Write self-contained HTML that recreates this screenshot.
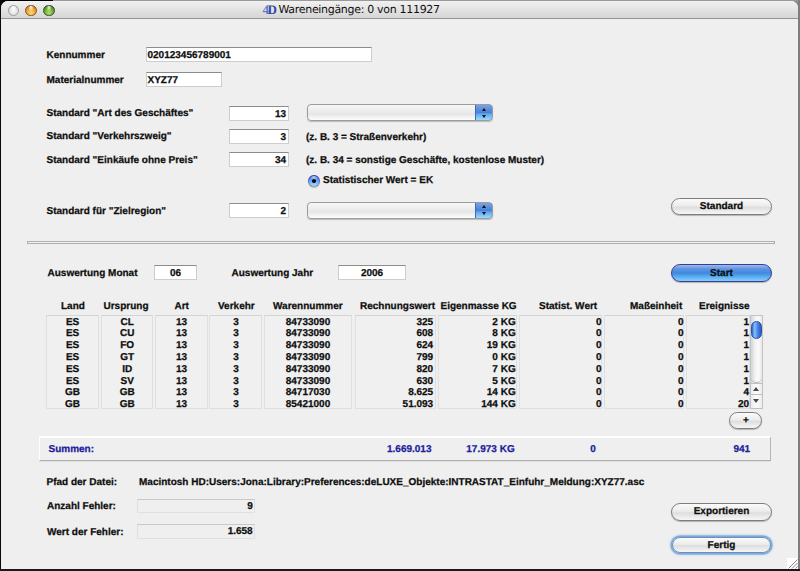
<!DOCTYPE html>
<html lang="de">
<head>
<meta charset="utf-8">
<title>Wareneingänge: 0 von 111927</title>
<style>
html,body{margin:0;padding:0;}
body{width:800px;height:571px;overflow:hidden;background:#8c8c8c;position:relative;
 font-family:"Liberation Sans",sans-serif;font-weight:bold;font-size:10px;color:#0e0e0e;line-height:12px;-webkit-text-stroke:0.25px;text-rendering:geometricPrecision;}
#edgeL{position:absolute;left:0;top:0;width:2px;height:571px;background:#0a0a0a;}
#edgeB{position:absolute;left:0;top:569px;width:800px;height:2px;background:#1a1a1a;}
#edgeT{position:absolute;left:0;top:0;width:53px;height:1px;background:#000;}#cornerTL{position:absolute;left:0;top:0;width:9px;height:9px;background:#000;}
#edgeT2{position:absolute;left:53px;top:0;width:747px;height:1px;background:#9a9a9a;}
#edgeR{position:absolute;left:798px;top:0;width:2px;height:571px;background:#7e7e7e;}
#win{position:absolute;left:1px;top:1px;width:797px;height:568px;background:#efefef;border-radius:7px 7px 0 0;overflow:hidden;}
#tb{position:absolute;left:0;top:0;width:797px;height:17px;background:linear-gradient(#f1f1f1 0%,#e6e6e6 40%,#d6d6d6 100%);border-bottom:1px solid #969696;}
#title{position:absolute;left:277.5px;top:1.5px;font:normal 11px/14px "DejaVu Sans","Liberation Sans",sans-serif;letter-spacing:-0.31px;color:#111;white-space:nowrap;-webkit-text-stroke:0;}
#ic4d{position:absolute;left:261.5px;top:1.5px;font:bold 13px/14px "Liberation Serif",serif;color:#3048a8;letter-spacing:-1.6px;-webkit-text-stroke:0;}#ic4d b{color:#5f7ccc;}
.tl{position:absolute;top:3.6px;width:11.6px;height:11.6px;border-radius:50%;box-sizing:border-box;}
#pg{position:absolute;left:-1px;top:-1px;width:800px;height:571px;}
.t{position:absolute;white-space:nowrap;}
.f{position:absolute;box-sizing:border-box;background:#fff;border:1px solid #cdcdcd;border-top-color:#8c8c8c;white-space:nowrap;line-height:12px;padding:2px 2px 0 0.5px;}
.f.r{text-align:right;}
.f.c{text-align:center;padding-left:0;padding-right:0;}
.ro{position:absolute;box-sizing:border-box;border:1px solid #e0e0e0;border-top-color:#c8c8c8;background:#efefef;text-align:right;padding:1px 1px 0 0;white-space:nowrap;}
.btn{position:absolute;box-sizing:border-box;border:1px solid #7d7d7d;border-radius:9px;text-align:center;
 background:linear-gradient(#fbfbfb 0%,#ececec 45%,#dedede 55%,#f6f6f6 100%);box-shadow:0 1px 1px rgba(0,0,0,.25);line-height:16.4px;white-space:nowrap;}
.pop{position:absolute;box-sizing:border-box;border:1px solid #9c9c9c;border-radius:4px;height:17px;
 background:linear-gradient(#f7f7f7 0%,#eaeaea 50%,#e4e4e4 55%,#fdfdfd 100%);box-shadow:0 1px 1px rgba(0,0,0,.22);overflow:hidden;}
.pop i{position:absolute;right:-1px;top:-1px;width:18px;height:17px;box-sizing:border-box;border:1px solid #4468b8;border-radius:0 4px 4px 0;background:linear-gradient(#77a4e4 0%,#5a8edc 30%,#4682dc 50%,#5fa6ea 60%,#9adafc 100%);}
.pop i:before{content:"";position:absolute;left:6px;top:2.5px;border:2px solid transparent;border-top:0;border-bottom:3.5px solid #111;}
.pop i:after{content:"";position:absolute;left:6px;top:9.5px;border:2px solid transparent;border-bottom:0;border-top:3.5px solid #111;}
.cell{position:absolute;top:315px;height:94px;box-sizing:border-box;border:1px solid #dfdfdf;border-top-color:#d4d4d4;background:#f0f0f0;}
.col{position:absolute;line-height:11.9px;white-space:pre;}
.col.c{text-align:center;}
.col.r{text-align:right;}
.blue{color:#1c1c9c;}
#radio{position:absolute;left:307.8px;top:174.8px;width:12.2px;height:12.4px;border-radius:50%;background:linear-gradient(#3434ac 0%,#4a6cc8 50%,#8a9cb4 100%);box-shadow:0 1px 1px rgba(0,0,0,.22);}
#radio:before{content:"";position:absolute;left:1.2px;top:1.2px;right:1.2px;bottom:1.2px;border-radius:50%;background:radial-gradient(ellipse at 50% 12%,rgba(255,255,255,.55) 0,rgba(255,255,255,0) 45%),linear-gradient(#5584dc 0%,#62a0ea 45%,#a6e2ff 100%);}
#radio:after{content:"";position:absolute;left:4.3px;top:4.2px;width:3.6px;height:3.6px;border-radius:50%;background:#0a0a14;}
#sep{position:absolute;left:27px;top:241px;width:748px;height:3px;box-sizing:border-box;border:1px solid #adadad;background:#f4f4f4;}
.btn.start{border-color:#3c3c98;background:linear-gradient(#9db9e8 0%,#5c95e2 25%,#3f88e0 50%,#55a8ee 70%,#86d0fa 100%);}
.btn.focus{box-shadow:0 0 0 1.5px #7aa9dc,0 0 2px 2px rgba(122,169,220,.6);border-color:#6a8fc0;}
#sb{position:absolute;left:750px;top:315px;width:12.5px;height:93.5px;box-sizing:border-box;border:1px solid #c4c4c4;background:linear-gradient(90deg,#d4d4d4 0%,#f4f4f4 40%,#fafafa 70%,#e6e6e6 100%);}
#thumb{position:absolute;left:0px;top:5px;width:10.5px;height:17.5px;border-radius:5.5px;box-sizing:border-box;border:1px solid #2c4cb0;background:linear-gradient(90deg,#2f62cc 0%,#86c0f8 30%,#4a8ae6 60%,#2a58c4 100%);}
#trackend{position:absolute;left:0;top:50px;width:10.5px;height:16px;border-radius:0 0 6px 6px;border-bottom:1px solid #b8b8b8;}
.ar{position:absolute;left:-1px;width:12.5px;box-sizing:border-box;border:1px solid #c0c0c0;background:linear-gradient(90deg,#ececec,#fbfbfb 50%,#ececec);}
.ar.up{top:66.5px;height:12.5px;}
.ar.dn{top:78px;height:14.5px;}
.ar.up:after{content:"";position:absolute;left:2.4px;top:3.2px;border:3px solid transparent;border-top:0;border-bottom:4px solid #484848;}
.ar.dn:after{content:"";position:absolute;left:2.4px;top:4.2px;border:3px solid transparent;border-bottom:0;border-top:4px solid #484848;}
#sum{position:absolute;left:38.75px;top:436px;width:732px;height:24.5px;box-sizing:border-box;border:1px solid #fff;border-top:2px solid #fff;border-right:1px solid #b4b4b4;border-bottom:1px solid #b0b0b0;background:#efefef;box-shadow:0 1px 0 rgba(0,0,0,.06);}
#grip{position:absolute;left:787px;top:558px;width:11px;height:11px;background:#fff;}
#grip svg{display:block;}
</style>
</head>
<body>
<div id="cornerTL"></div><div id="edgeT"></div><div id="edgeT2"></div><div id="edgeR"></div><div id="edgeL"></div><div id="edgeB"></div>
<div id="win">
 <div id="tb">
  <div class="tl" style="left:6.7px;background:radial-gradient(ellipse at 50% 18%,#fff 0,rgba(255,255,255,0) 50%),radial-gradient(circle at 50% 60%,#f4f4f4 0%,#e0e0e0 60%,#c4c4c4 100%);border:1px solid #9c9c9c;"></div>
  <div class="tl" style="left:24.3px;background:radial-gradient(ellipse at 50% 14%,rgba(255,255,255,.9) 0,rgba(255,255,255,0) 42%),radial-gradient(circle at 50% 78%,#f8dc60 0%,#eca63c 50%,#b4601c 100%);border:1px solid #8c4a16;"></div>
  <div class="tl" style="left:42px;background:radial-gradient(ellipse at 50% 14%,rgba(255,255,255,.85) 0,rgba(255,255,255,0) 42%),radial-gradient(circle at 50% 78%,#b0e068 0%,#6cb030 50%,#38601c 100%);border:1px solid #36462c;"></div>
  <div id="ic4d"><b>4</b>D</div>
  <div id="title">Wareneingänge: 0 von 111927</div>
 </div>
 <div id="pg">
<div class="t" style="left:46.5px;top:49.50px;">Kennummer</div>
<div class="t" style="left:46.5px;top:74.50px;">Materialnummer</div>
<div class="t" style="left:46.5px;top:107.50px;">Standard "Art des Geschäftes"</div>
<div class="t" style="left:46.5px;top:130.50px;">Standard "Verkehrszweig"</div>
<div class="t" style="left:46.5px;top:154.50px;">Standard "Einkäufe ohne Preis"</div>
<div class="t" style="left:46.5px;top:205.50px;">Standard für "Zielregion"</div>
<div class="t" style="left:47.5px;top:267.50px;">Auswertung Monat</div>
<div class="t" style="left:231.5px;top:267.50px;">Auswertung Jahr</div>
<div class="t" style="left:306px;top:131.50px;">(z. B. 3 = Straßenverkehr)</div>
<div class="t" style="left:306px;top:154.50px;">(z. B. 34 = sonstige Geschäfte, kostenlose Muster)</div>
<div class="t" style="left:323px;top:174.50px;">Statistischer Wert = EK</div>
<div class="t" style="left:46.5px;top:476.50px;">Pfad der Datei:</div>
<div class="t" style="left:139px;top:476.50px;">Macintosh HD:Users:Jona:Library:Preferences:deLUXE_Objekte:INTRASTAT_Einfuhr_Meldung:XYZ77.asc</div>
<div class="t" style="left:47px;top:500.50px;">Anzahl Fehler:</div>
<div class="t" style="left:47px;top:527.10px;">Wert der Fehler:</div>
<div class="f " style="left:146px;top:47px;width:226px;height:15px;">020123456789001</div>
<div class="f " style="left:146px;top:72px;width:76px;height:15px;">XYZ77</div>
<div class="f r" style="left:229px;top:106px;width:60px;height:15px;">13</div>
<div class="f r" style="left:229px;top:129px;width:60px;height:15px;">3</div>
<div class="f r" style="left:229px;top:152px;width:60px;height:15px;">34</div>
<div class="f r" style="left:229px;top:203px;width:60px;height:15px;">2</div>
<div class="f c" style="left:154px;top:265px;width:43px;height:15px;">06</div>
<div class="f c" style="left:338px;top:265px;width:68px;height:15px;">2006</div>
<div class="pop" style="left:307px;top:104px;width:185.5px;"><i></i></div>
<div class="pop" style="left:307px;top:201.5px;width:185.5px;"><i></i></div>
<div id="radio"></div>
<div id="sep"></div>
<div class="btn" style="left:671px;top:197.5px;width:101px;height:17px;">Standard</div>
<div class="btn start" style="left:671px;top:264px;width:101px;height:17.5px;line-height:17.2px;">Start</div>
<div class="btn" style="left:729.3px;top:412px;width:33px;height:17px;">+</div>
<div class="btn" style="left:671px;top:503px;width:101px;height:17.5px;">Exportieren</div>
<div class="btn focus" style="left:672px;top:537px;width:99px;height:16px;line-height:15.6px;">Fertig</div>
<div class="t" style="left:61px;top:300.50px;">Land</div>
<div class="t" style="left:103.5px;top:300.50px;">Ursprung</div>
<div class="t" style="left:174.5px;top:300.50px;">Art</div>
<div class="t" style="left:218px;top:300.50px;">Verkehr</div>
<div class="t" style="left:273px;top:300.50px;">Warennummer</div>
<div class="t" style="left:360px;top:300.50px;">Rechnungswert</div>
<div class="t" style="left:440.5px;top:300.50px;">Eigenmasse KG</div>
<div class="t" style="left:539px;top:300.50px;">Statist. Wert</div>
<div class="t" style="left:630px;top:300.50px;">Maßeinheit</div>
<div class="t" style="left:699px;top:300.50px;">Ereignisse</div>
<div class="cell" style="left:46.25px;width:52.95px;"></div>
<div class="cell" style="left:100.6px;width:52.90px;"></div>
<div class="cell" style="left:155px;width:52.50px;"></div>
<div class="cell" style="left:209.4px;width:52.60px;"></div>
<div class="cell" style="left:263.7px;width:88.80px;"></div>
<div class="cell" style="left:354.5px;width:81.50px;"></div>
<div class="cell" style="left:437.6px;width:79.40px;"></div>
<div class="cell" style="left:518.5px;width:83.70px;"></div>
<div class="cell" style="left:604px;width:80.00px;"></div>
<div class="cell" style="left:685.5px;width:64.50px;"></div>
<div class="t" style="left:32.599999999999994px;width:80px;text-align:center;top:316.6px;">ES</div>
<div class="t" style="left:32.599999999999994px;width:80px;text-align:center;top:328.4px;">ES</div>
<div class="t" style="left:32.599999999999994px;width:80px;text-align:center;top:340.2px;">ES</div>
<div class="t" style="left:32.599999999999994px;width:80px;text-align:center;top:352.0px;">ES</div>
<div class="t" style="left:32.599999999999994px;width:80px;text-align:center;top:363.8px;">ES</div>
<div class="t" style="left:32.599999999999994px;width:80px;text-align:center;top:375.6px;">ES</div>
<div class="t" style="left:32.599999999999994px;width:80px;text-align:center;top:387.4px;">GB</div>
<div class="t" style="left:32.599999999999994px;width:80px;text-align:center;top:399.2px;">GB</div>
<div class="t" style="left:87.2px;width:80px;text-align:center;top:316.6px;">CL</div>
<div class="t" style="left:87.2px;width:80px;text-align:center;top:328.4px;">CU</div>
<div class="t" style="left:87.2px;width:80px;text-align:center;top:340.2px;">FO</div>
<div class="t" style="left:87.2px;width:80px;text-align:center;top:352.0px;">GT</div>
<div class="t" style="left:87.2px;width:80px;text-align:center;top:363.8px;">ID</div>
<div class="t" style="left:87.2px;width:80px;text-align:center;top:375.6px;">SV</div>
<div class="t" style="left:87.2px;width:80px;text-align:center;top:387.4px;">GB</div>
<div class="t" style="left:87.2px;width:80px;text-align:center;top:399.2px;">GB</div>
<div class="t" style="left:141.5px;width:80px;text-align:center;top:316.6px;">13</div>
<div class="t" style="left:141.5px;width:80px;text-align:center;top:328.4px;">13</div>
<div class="t" style="left:141.5px;width:80px;text-align:center;top:340.2px;">13</div>
<div class="t" style="left:141.5px;width:80px;text-align:center;top:352.0px;">13</div>
<div class="t" style="left:141.5px;width:80px;text-align:center;top:363.8px;">13</div>
<div class="t" style="left:141.5px;width:80px;text-align:center;top:375.6px;">13</div>
<div class="t" style="left:141.5px;width:80px;text-align:center;top:387.4px;">13</div>
<div class="t" style="left:141.5px;width:80px;text-align:center;top:399.2px;">13</div>
<div class="t" style="left:196px;width:80px;text-align:center;top:316.6px;">3</div>
<div class="t" style="left:196px;width:80px;text-align:center;top:328.4px;">3</div>
<div class="t" style="left:196px;width:80px;text-align:center;top:340.2px;">3</div>
<div class="t" style="left:196px;width:80px;text-align:center;top:352.0px;">3</div>
<div class="t" style="left:196px;width:80px;text-align:center;top:363.8px;">3</div>
<div class="t" style="left:196px;width:80px;text-align:center;top:375.6px;">3</div>
<div class="t" style="left:196px;width:80px;text-align:center;top:387.4px;">3</div>
<div class="t" style="left:196px;width:80px;text-align:center;top:399.2px;">3</div>
<div class="t" style="left:268px;width:80px;text-align:center;top:316.6px;">84733090</div>
<div class="t" style="left:268px;width:80px;text-align:center;top:328.4px;">84733090</div>
<div class="t" style="left:268px;width:80px;text-align:center;top:340.2px;">84733090</div>
<div class="t" style="left:268px;width:80px;text-align:center;top:352.0px;">84733090</div>
<div class="t" style="left:268px;width:80px;text-align:center;top:363.8px;">84733090</div>
<div class="t" style="left:268px;width:80px;text-align:center;top:375.6px;">84733090</div>
<div class="t" style="left:268px;width:80px;text-align:center;top:387.4px;">84717030</div>
<div class="t" style="left:268px;width:80px;text-align:center;top:399.2px;">85421000</div>
<div class="t" style="left:353.2px;width:80px;text-align:right;top:316.6px;">325</div>
<div class="t" style="left:353.2px;width:80px;text-align:right;top:328.4px;">608</div>
<div class="t" style="left:353.2px;width:80px;text-align:right;top:340.2px;">624</div>
<div class="t" style="left:353.2px;width:80px;text-align:right;top:352.0px;">799</div>
<div class="t" style="left:353.2px;width:80px;text-align:right;top:363.8px;">820</div>
<div class="t" style="left:353.2px;width:80px;text-align:right;top:375.6px;">630</div>
<div class="t" style="left:353.2px;width:80px;text-align:right;top:387.4px;">8.625</div>
<div class="t" style="left:353.2px;width:80px;text-align:right;top:399.2px;">51.093</div>
<div class="t" style="left:435.70000000000005px;width:80px;text-align:right;top:316.6px;">2 KG</div>
<div class="t" style="left:435.70000000000005px;width:80px;text-align:right;top:328.4px;">8 KG</div>
<div class="t" style="left:435.70000000000005px;width:80px;text-align:right;top:340.2px;">19 KG</div>
<div class="t" style="left:435.70000000000005px;width:80px;text-align:right;top:352.0px;">0 KG</div>
<div class="t" style="left:435.70000000000005px;width:80px;text-align:right;top:363.8px;">7 KG</div>
<div class="t" style="left:435.70000000000005px;width:80px;text-align:right;top:375.6px;">5 KG</div>
<div class="t" style="left:435.70000000000005px;width:80px;text-align:right;top:387.4px;">14 KG</div>
<div class="t" style="left:435.70000000000005px;width:80px;text-align:right;top:399.2px;">144 KG</div>
<div class="t" style="left:521.5px;width:80px;text-align:right;top:316.6px;">0</div>
<div class="t" style="left:521.5px;width:80px;text-align:right;top:328.4px;">0</div>
<div class="t" style="left:521.5px;width:80px;text-align:right;top:340.2px;">0</div>
<div class="t" style="left:521.5px;width:80px;text-align:right;top:352.0px;">0</div>
<div class="t" style="left:521.5px;width:80px;text-align:right;top:363.8px;">0</div>
<div class="t" style="left:521.5px;width:80px;text-align:right;top:375.6px;">0</div>
<div class="t" style="left:521.5px;width:80px;text-align:right;top:387.4px;">0</div>
<div class="t" style="left:521.5px;width:80px;text-align:right;top:399.2px;">0</div>
<div class="t" style="left:603.5px;width:80px;text-align:right;top:316.6px;">0</div>
<div class="t" style="left:603.5px;width:80px;text-align:right;top:328.4px;">0</div>
<div class="t" style="left:603.5px;width:80px;text-align:right;top:340.2px;">0</div>
<div class="t" style="left:603.5px;width:80px;text-align:right;top:352.0px;">0</div>
<div class="t" style="left:603.5px;width:80px;text-align:right;top:363.8px;">0</div>
<div class="t" style="left:603.5px;width:80px;text-align:right;top:375.6px;">0</div>
<div class="t" style="left:603.5px;width:80px;text-align:right;top:387.4px;">0</div>
<div class="t" style="left:603.5px;width:80px;text-align:right;top:399.2px;">0</div>
<div class="t" style="left:669px;width:80px;text-align:right;top:316.6px;">1</div>
<div class="t" style="left:669px;width:80px;text-align:right;top:328.4px;">1</div>
<div class="t" style="left:669px;width:80px;text-align:right;top:340.2px;">1</div>
<div class="t" style="left:669px;width:80px;text-align:right;top:352.0px;">1</div>
<div class="t" style="left:669px;width:80px;text-align:right;top:363.8px;">1</div>
<div class="t" style="left:669px;width:80px;text-align:right;top:375.6px;">1</div>
<div class="t" style="left:669px;width:80px;text-align:right;top:387.4px;">4</div>
<div class="t" style="left:669px;width:80px;text-align:right;top:399.2px;">20</div>
<div id="sb"><div id="thumb"></div><div id="trackend"></div><div class="ar up"></div><div class="ar dn"></div></div>
<div id="sum"></div>
<div class="t" style="left:48.5px;top:443.50px;color:#1c1c9c;">Summen:</div>
<div class="t" style="left:387px;top:443.50px;color:#1c1c9c;">1.669.013</div>
<div class="t" style="left:466.3px;top:443.50px;color:#1c1c9c;">17.973 KG</div>
<div class="t" style="left:590.3px;top:443.50px;color:#1c1c9c;">0</div>
<div class="t" style="left:733.5px;top:443.50px;color:#1c1c9c;">941</div>
<div class="ro" style="left:137.3px;top:499px;width:117.4px;height:14px;">9</div>
<div class="ro" style="left:137.3px;top:524px;width:117.4px;height:14.5px;">1.658</div>
<div id="grip"><svg width="11" height="11" viewBox="0 0 11 11"><path d="M10.5 1.5L1.5 10.5M10.5 5L5 10.5M10.5 8.5L8.5 10.5" stroke="#8a8a8a" stroke-width="1" fill="none"/></svg></div>
 </div>
</div>
</body>
</html>
